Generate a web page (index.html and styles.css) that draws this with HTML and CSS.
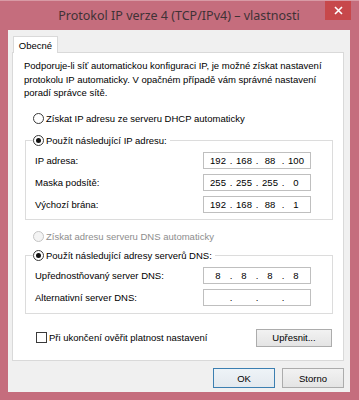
FILE: index.html
```html
<!DOCTYPE html>
<html lang="cs">
<head>
<meta charset="utf-8">
<title>Protokol IP verze 4 (TCP/IPv4) – vlastnosti</title>
<link rel="stylesheet" href="styles.css">
</head>
<body>
<div class="window">
  <div class="titlebar">
    <span class="title">Protokol IP verze 4 (TCP/IPv4) – vlastnosti</span>
    <span class="close">
      <svg width="9" height="9" viewBox="0 0 9 9"><path d="M1 1 L8 8 M8 1 L1 8" stroke="#fff" stroke-width="1.6"/></svg>
    </span>
  </div>
  <div class="client">
    <div class="tabs"><div class="tab">Obecné</div></div>
    <div class="panel">
      <p class="intro">Podporuje-li síť automatickou konfiguraci IP, je možné získat nastavení protokolu IP automaticky. V opačném případě vám správné nastavení poradí správce sítě.</p>
      <div class="option"><span class="radio"></span>Získat IP adresu ze serveru DHCP automaticky</div>
      <fieldset class="group">
        <legend class="option"><span class="radio checked"></span>Použít následující IP adresu:</legend>
        <div class="field-row"><span class="label">IP adresa:</span>
          <div class="ip"><span>192</span><i>.</i><span>168</span><i>.</i><span>88</span><i>.</i><span>100</span></div></div>
        <div class="field-row"><span class="label">Maska podsítě:</span>
          <div class="ip"><span>255</span><i>.</i><span>255</span><i>.</i><span>255</span><i>.</i><span>0</span></div></div>
        <div class="field-row"><span class="label">Výchozí brána:</span>
          <div class="ip"><span>192</span><i>.</i><span>168</span><i>.</i><span>88</span><i>.</i><span>1</span></div></div>
      </fieldset>
      <div class="option disabled"><span class="radio"></span>Získat adresu serveru DNS automaticky</div>
      <fieldset class="group group-dns">
        <legend class="option"><span class="radio checked"></span>Použít následující adresy serverů DNS:</legend>
        <div class="field-row"><span class="label">Upřednostňovaný server DNS:</span>
          <div class="ip"><span>8</span><i>.</i><span>8</span><i>.</i><span>8</span><i>.</i><span>8</span></div></div>
        <div class="field-row"><span class="label">Alternativní server DNS:</span>
          <div class="ip"><span></span><i>.</i><span></span><i>.</i><span></span><i>.</i><span></span></div></div>
      </fieldset>
      <div class="bottom-row">
        <div class="option check-option"><span class="checkbox"></span>Při ukončení ověřit platnost nastavení</div>
        <button class="btn btn-adv">Upřesnit...</button>
      </div>
    </div>
    <div class="buttons">
      <button class="btn btn-default">OK</button>
      <button class="btn">Storno</button>
    </div>
  </div>
</div>
</body>
</html>
```
FILE: styles.css
```css
html, body {
  margin: 0;
  padding: 0;
}
body {
  width: 359px;
  height: 400px;
  overflow: hidden;
  font-family: "Liberation Sans", Arial, sans-serif;
  font-size: 9.5px;
  color: #000;
}
.window {
  box-sizing: border-box;
  width: 359px;
  height: 400px;
  background: #c56d7d;
  border-top: 1px solid #d89aa5;
  padding: 0 9px 8px 8px;
  display: flex;
  flex-direction: column;
}
.titlebar {
  position: relative;
  height: 29px;
  display: flex;
  align-items: center;
  justify-content: center;
  flex: none;
}
.title {
  font-family: "Noto Sans", "Open Sans", sans-serif;
  font-size: 12.5px;
  color: #3f3236;
  margin-top: -1px;
}
.close {
  position: absolute;
  right: -1px;
  top: 0;
  width: 26px;
  height: 19px;
  background: #c7484b;
  display: flex;
  align-items: center;
  justify-content: center;
}
.client {
  flex: 1;
  background: #f0f0f0;
  padding: 6px 6px 0 4px;
  display: flex;
  flex-direction: column;
}
.tabs {
  display: flex;
  padding-left: 1px;
  height: 16px;
  position: relative;
  z-index: 1;
}
.tab {
  box-sizing: border-box;
  height: 17px;
  padding: 0 6px;
  border: 1px solid #d9d9d9;
  border-bottom: none;
  background: #fff;
  display: flex;
  align-items: center;
  width: 45px;
  justify-content: center;
}
.panel {
  box-sizing: border-box;
  height: 309px;
  border: 1px solid #d9d9d9;
  background: #fff;
  padding: 6px 10px 0 12px;
  display: flex;
  flex-direction: column;
}
.intro {
  margin: 0 0 0 -1px;
  line-height: 13.5px;
}
.option {
  display: flex;
  align-items: center;
  height: 13px;
  white-space: nowrap;
}
.panel > .option {
  margin-left: 8px;
  margin-top: 12px;
}
.panel > .option.disabled {
  margin-top: 10px;
  color: #8d8d8d;
}
.radio {
  box-sizing: border-box;
  width: 11px;
  height: 11px;
  border: 1px solid #3a3a3a;
  border-radius: 50%;
  background: #fff;
  margin-right: 2px;
  flex: none;
  display: flex;
  align-items: center;
  justify-content: center;
}
.radio.checked::after {
  content: "";
  width: 5px;
  height: 5px;
  border-radius: 50%;
  background: #111;
}
.disabled .radio {
  border-color: #c4c4c4;
  background: #f4f4f4;
}
.group {
  margin: 9px 0 0 0;
  border: 1px solid #dcdcdc;
  padding: 5px 21px 6px 9px;
  display: flex;
  flex-direction: column;
  gap: 5px;
}
.group legend {
  padding: 0 3px 0 0;
  margin-left: -2px;
}
.group-dns {
  margin-top: 6px;
  padding-top: 5px;
  padding-bottom: 7px;
}
.field-row {
  display: flex;
  align-items: center;
  justify-content: space-between;
  height: 17px;
}
.ip {
  box-sizing: border-box;
  width: 108px;
  height: 17px;
  border: 1px solid #bfbfbf;
  padding: 0 2px;
  display: grid;
  grid-template-columns: 24px 2px 24px 2px 24px 2px 24px;
  align-items: center;
  text-align: center;
  background: #fff;
}
.ip i {
  font-style: normal;
  display: flex;
  justify-content: center;
  overflow: visible;
  width: 2px;
}
.bottom-row {
  margin-top: 15px;
  display: flex;
  align-items: center;
  justify-content: space-between;
  padding-left: 11px;
  padding-right: 1px;
}
.checkbox {
  box-sizing: border-box;
  width: 11px;
  height: 11px;
  border: 1px solid #3a3a3a;
  background: #fff;
  margin-right: 2px;
  flex: none;
}
.btn {
  box-sizing: border-box;
  font-family: "Liberation Sans", Arial, sans-serif;
  font-size: 9.5px;
  color: #000;
  background: linear-gradient(#f2f2f2, #e4e4e4);
  border: 1px solid #acacac;
  border-radius: 0;
  padding: 0;
  margin: 0;
}
.btn-adv {
  width: 76px;
  height: 18px;
}
.buttons {
  display: flex;
  justify-content: flex-end;
  gap: 7px;
  margin-top: 7px;
}
.buttons .btn {
  width: 62px;
  height: 20px;
}
.btn-default {
  border-color: #3c7fb1;
  background: linear-gradient(#eef3f7, #e3e9ee);
}
```
